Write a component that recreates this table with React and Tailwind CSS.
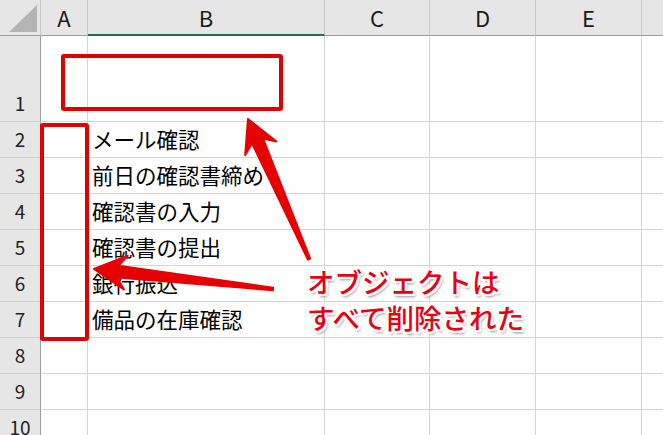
const cols = ["A", "B", "C", "D", "E"];
const rows = [
  { n: 1, text: "" },
  { n: 2, text: "メール確認" },
  { n: 3, text: "前日の確認書締め" },
  { n: 4, text: "確認書の入力" },
  { n: 5, text: "確認書の提出" },
  { n: 6, text: "銀行振込" },
  { n: 7, text: "備品の在庫確認" },
  { n: 8, text: "" },
  { n: 9, text: "" },
  { n: 10, text: "" },
];

function arrowPoints(tip, tail, h = 32, w = 17, ws = 6, wt = 1.2) {
  const dx = tip[0] - tail[0];
  const dy = tip[1] - tail[1];
  const len = Math.hypot(dx, dy);
  const d = [dx / len, dy / len];
  const n = [-d[1], d[0]];
  const at = (base, along, side) => [
    base[0] - d[0] * along + n[0] * side,
    base[1] - d[1] * along + n[1] * side,
  ];
  const pts = [
    tip,
    at(tip, h, w),
    at(tip, h * 0.75, ws),
    at(tail, 0, wt),
    at(tail, 0, -wt),
    at(tip, h * 0.75, -ws),
    at(tip, h, -w),
  ];
  return pts.map((p) => p.map((v) => v.toFixed(1)).join(",")).join(" ");
}

function Arrow({ tip, tail }) {
  return (
    <polygon
      points={arrowPoints(tip, tail)}
      fill="#e60000"
      stroke="#e60000"
      strokeWidth="2"
      strokeLinejoin="round"
    />
  );
}

export default function App() {
  return (
    <div className="relative w-[663px] h-[435px] overflow-hidden bg-white font-['Noto_Sans_CJK_JP',sans-serif]">
      <div className="grid grid-cols-[41px_47px_237px_105px_106px_106px_1fr] grid-rows-[36px_86px_repeat(9,36px)]">
        {/* corner */}
        <div className="relative bg-[#e6e6e6] border-r border-b border-r-[#c8c8c8] border-b-[#9e9e9e]">
          <svg className="absolute left-0 top-0" width="41" height="35">
            <polygon points="9,32 37,32 37,5" fill="#b4b4b4" />
          </svg>
        </div>
        {cols.map((c) => (
          <div
            key={c}
            className={`flex items-center justify-center bg-[#e6e6e6] border-r border-r-[#c8c8c8] text-[22px] text-[#1a1a1a] ${
              c === "B" ? "border-b-2 border-b-[#217346]" : "border-b border-b-[#9e9e9e]"
            }`}
          >
            {c}
          </div>
        ))}
        <div className="bg-[#e6e6e6] border-b border-b-[#9e9e9e]" />

        {rows.map((r) => (
          <div key={r.n} className="contents">
            <div className="flex items-end justify-center bg-[#e6e6e6] border-r border-b border-r-[#9e9e9e] border-b-[#d0d0d0] text-[19px] text-[#222]">
              <div className="h-[35px] flex items-center">{r.n}</div>
            </div>
            <div className="border-r border-b border-[#d4d4d4]" />
            <div className="flex items-center pl-[4px] border-r border-b border-[#d4d4d4] text-[21.5px] text-black whitespace-nowrap">
              {r.text}
            </div>
            <div className="border-r border-b border-[#d4d4d4]" />
            <div className="border-r border-b border-[#d4d4d4]" />
            <div className="border-r border-b border-[#d4d4d4]" />
            <div className="border-b border-[#d4d4d4]" />
          </div>
        ))}
      </div>

      {/* annotations */}
      <div className="absolute left-[61px] top-[54px] w-[222px] h-[57px] border-4 border-[#e00000] rounded-[3px]" />
      <div className="absolute left-[40px] top-[123px] w-[49px] h-[218px] border-4 border-[#e00000] rounded-[3px]" />

      <svg className="absolute left-0 top-0" width="663" height="435">
        <Arrow tip={[248, 119]} tail={[309, 259]} />
        <Arrow tip={[94, 269]} tail={[273, 289]} />
      </svg>

      <div className="absolute left-[307px] top-[263px] text-[27.5px] leading-[36px] font-medium text-[#e60012] whitespace-nowrap [text-shadow:2px_0_0_#fff,-2px_0_0_#fff,0_2px_0_#fff,0_-2px_0_#fff,2px_2px_0_#fff,-2px_-2px_0_#fff,2px_-2px_0_#fff,-2px_2px_0_#fff,2px_3px_3px_#8a8a8a]">
        <div>オブジェクトは</div>
        <div>すべて削除された</div>
      </div>
    </div>
  );
}
